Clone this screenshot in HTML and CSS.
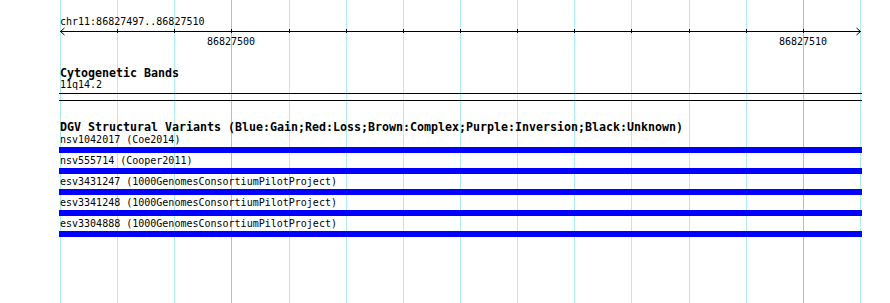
FILE: index.html
```html
<!DOCTYPE html>
<html>
<head>
<meta charset="utf-8">
<link rel="stylesheet" href="styles.css">
</head>
<body>
<div class="view">
  <div class="grid">
    <div class="gl" style="left:60px"></div>
    <div class="gl" style="left:117px"></div>
    <div class="gl" style="left:174px"></div>
    <div class="gl major" style="left:231px"></div>
    <div class="gl" style="left:289px"></div>
    <div class="gl" style="left:346px"></div>
    <div class="gl" style="left:403px"></div>
    <div class="gl" style="left:460px"></div>
    <div class="gl" style="left:517px"></div>
    <div class="gl" style="left:574px"></div>
    <div class="gl" style="left:631px"></div>
    <div class="gl" style="left:689px"></div>
    <div class="gl" style="left:746px"></div>
    <div class="gl major" style="left:803px"></div>
    <div class="gl" style="left:860px"></div>
  </div>
  <div class="tracks">
    <div class="ruler">
      <div class="loc">chr11:86827497..86827510</div>
      <svg class="scale" width="803" height="21" viewBox="0 0 803 21">
        <g stroke="#000" stroke-width="1" fill="none" shape-rendering="crispEdges">
          <line x1="1" y1="4.5" x2="802" y2="4.5"/>
          <line x1="58.5" y1="2" x2="58.5" y2="6"/>
          <line x1="115.5" y1="2" x2="115.5" y2="6"/>
          <line x1="172.5" y1="2" x2="172.5" y2="6"/>
          <line x1="230.5" y1="2" x2="230.5" y2="6"/>
          <line x1="287.5" y1="2" x2="287.5" y2="6"/>
          <line x1="344.5" y1="2" x2="344.5" y2="6"/>
          <line x1="401.5" y1="2" x2="401.5" y2="6"/>
          <line x1="458.5" y1="2" x2="458.5" y2="6"/>
          <line x1="515.5" y1="2" x2="515.5" y2="6"/>
          <line x1="572.5" y1="2" x2="572.5" y2="6"/>
          <line x1="630.5" y1="2" x2="630.5" y2="6"/>
          <line x1="687.5" y1="2" x2="687.5" y2="6"/>
          <line x1="744.5" y1="2" x2="744.5" y2="6"/>
        </g>
        <g stroke="#000" stroke-width="1" fill="none">
          <polyline points="5.5,1 1.5,4.5 5.5,8"/>
          <polyline points="797.5,1 801.5,4.5 797.5,8"/>
        </g>
        <text x="172" y="17.5" text-anchor="middle" class="tick">86827500</text>
        <text x="744" y="17.5" text-anchor="middle" class="tick">86827510</text>
      </svg>
    </div>

    <div class="track cyto">
      <div class="track-title">Cytogenetic Bands</div>
      <div class="feat-label">11q14.2</div>
      <div class="band"></div>
    </div>

    <div class="track dgv">
      <div class="track-title">DGV Structural Variants (Blue:Gain;Red:Loss;Brown:Complex;Purple:Inversion;Black:Unknown)</div>
      <div class="row">
        <div class="feat-label">nsv1042017 (Coe2014)</div>
        <div class="bar"></div>
      </div>
      <div class="row">
        <div class="feat-label">nsv555714 (Cooper2011)</div>
        <div class="bar"></div>
      </div>
      <div class="row">
        <div class="feat-label">esv3431247 (1000GenomesConsortiumPilotProject)</div>
        <div class="bar"></div>
      </div>
      <div class="row">
        <div class="feat-label">esv3341248 (1000GenomesConsortiumPilotProject)</div>
        <div class="bar"></div>
      </div>
      <div class="row">
        <div class="feat-label">esv3304888 (1000GenomesConsortiumPilotProject)</div>
        <div class="bar"></div>
      </div>
    </div>
  </div>
</div>
</body>
</html>
```

FILE: styles.css
```css
html, body {
  margin: 0;
  padding: 0;
  background: #ffffff;
}

body {
  font-family: "DejaVu Sans Mono", "Liberation Mono", monospace;
  font-size: 10px;
  color: #000;
}

.view {
  position: relative;
  width: 890px;
  height: 303px;
  overflow: hidden;
}

.grid {
  position: absolute;
  inset: 0;
  z-index: 0;
}

.gl {
  position: absolute;
  top: 0;
  bottom: 0;
  width: 1px;
  background: #afeeee;
}

.gl.major {
  background: #87ceeb;
}

.tracks {
  position: relative;
  z-index: 1;
  margin-left: 59px;
  width: 803px;
  display: flex;
  flex-direction: column;
}

.ruler {
  padding-top: 17px;
  display: flex;
  flex-direction: column;
}

.loc {
  font-size: 10px;
  line-height: 10px;
  padding-left: 1px;
  white-space: nowrap;
}

.scale {
  display: block;
}

.tick {
  font-family: "DejaVu Sans Mono", "Liberation Mono", monospace;
  font-size: 10px;
  fill: #000;
}

.track {
  display: flex;
  flex-direction: column;
}

.track-title {
  font-weight: bold;
  font-size: 11.63px;
  line-height: 11px;
  padding-left: 1px;
  white-space: nowrap;
}

.cyto {
  margin-top: 20px;
}

.feat-label {
  font-size: 10px;
  line-height: 12px;
  padding-left: 1px;
  white-space: nowrap;
}

.band {
  margin-top: 2px;
  height: 6px;
  border-top: 1px solid #000;
  border-bottom: 1px solid #000;
}

.dgv {
  margin-top: 21px;
}

.row {
  padding-top: 1px;
  padding-bottom: 1px;
  display: flex;
  flex-direction: column;
}

.bar {
  margin-top: 1px;
  height: 6px;
  background: #0000ff;
}
```
